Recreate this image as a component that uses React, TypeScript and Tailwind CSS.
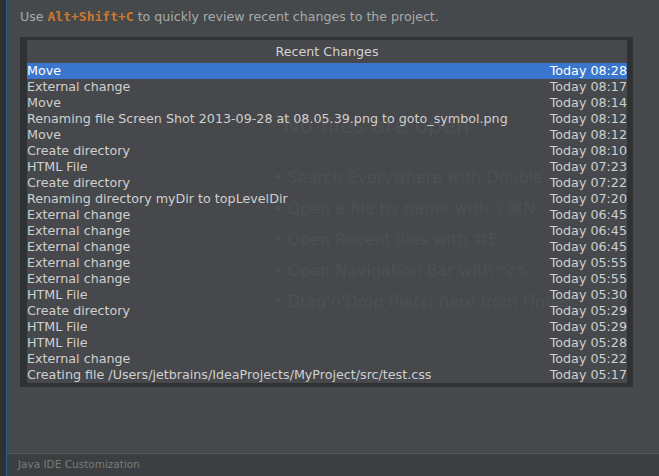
import React from "react";

const rows: [string, string][] = [
  ["Move", "Today 08:28"],
  ["External change", "Today 08:17"],
  ["Move", "Today 08:14"],
  ["Renaming file Screen Shot 2013-09-28 at 08.05.39.png to goto_symbol.png", "Today 08:12"],
  ["Move", "Today 08:12"],
  ["Create directory", "Today 08:10"],
  ["HTML File", "Today 07:23"],
  ["Create directory", "Today 07:22"],
  ["Renaming directory myDir to topLevelDir", "Today 07:20"],
  ["External change", "Today 06:45"],
  ["External change", "Today 06:45"],
  ["External change", "Today 06:45"],
  ["External change", "Today 05:55"],
  ["External change", "Today 05:55"],
  ["HTML File", "Today 05:30"],
  ["Create directory", "Today 05:29"],
  ["HTML File", "Today 05:29"],
  ["HTML File", "Today 05:28"],
  ["External change", "Today 05:22"],
  ["Creating file /Users/jetbrains/IdeaProjects/MyProject/src/test.css", "Today 05:17"],
];

const bullets = [
  "Search Everywhere with Double \u21E7",
  "Open a file by name with \u21E7\u2318N",
  "Open Recent files with \u2318E",
  "Open Navigation Bar with \u2325\u2196",
  "Drag'n'Drop file(s) here from Finder",
];

export default function App() {
  return (
    <div
      className="w-[659px] h-[476px] flex bg-[#46494b] overflow-hidden"
      style={{ fontFamily: '"DejaVu Sans", "Liberation Sans", sans-serif' }}
    >
      <div className="w-[6px] h-full bg-[#2e3032]" />
      <div className="w-px h-full bg-[#2a5d88]" />
      <div className="flex-1 flex flex-col min-w-0">
        <div className="relative flex-1 pl-[13px] pt-[9px]">
          {/* ghost editor placeholder behind the popup */}
          <div className="absolute left-[266px] top-[112px] text-[#52565a] pointer-events-none">
            <div className="text-[22px] leading-[28px] ml-[10px]">No files are open</div>
            <div className="mt-[29px] flex flex-col gap-[14px]">
              {bullets.map((b) => (
                <div key={b} className="text-[16px] leading-[17px] whitespace-nowrap">
                  <span className="mr-[5px]">•</span>
                  {b}
                </div>
              ))}
            </div>
          </div>

          <div className="relative text-[12.6px] leading-[16px] text-[#a7abad] whitespace-nowrap">
            Use{" "}
            <span
              className="text-[#cc7832] font-bold text-[13px]"
              style={{ fontFamily: '"DejaVu Sans Mono", "Liberation Mono", monospace' }}
            >
              Alt+Shift+C
            </span>{" "}
            to quickly review recent changes to the project.
          </div>

          <div className="relative mt-[12px] w-[613px] h-[350px] border-l-[7px] border-t-[3px] border-r-[6px] border-b-[4px] border-[#2f3133] bg-[#46494b]/40 flex flex-col">
            <div className="h-[23px] flex items-center justify-center text-[12.7px] text-[#d2d2d2]">
              Recent Changes
            </div>
            <div className="flex flex-col">
              {rows.map(([label, time], i) => (
                <div
                  key={i}
                  className={
                    "h-[16px] flex items-center justify-between text-[12.7px] leading-[16px] whitespace-nowrap " +
                    (i === 0 ? "bg-[#3a76cd] text-white" : "text-[#d0d0d0]")
                  }
                >
                  <span>{label}</span>
                  <span>{time}</span>
                </div>
              ))}
            </div>
          </div>
        </div>
        <div className="h-px bg-[#515557]" />
        <div className="h-[22px] bg-[#3c3f41] flex items-center pl-[11px] text-[10.5px] text-[#787b7d]">
          Java IDE Customization
        </div>
      </div>
    </div>
  );
}
